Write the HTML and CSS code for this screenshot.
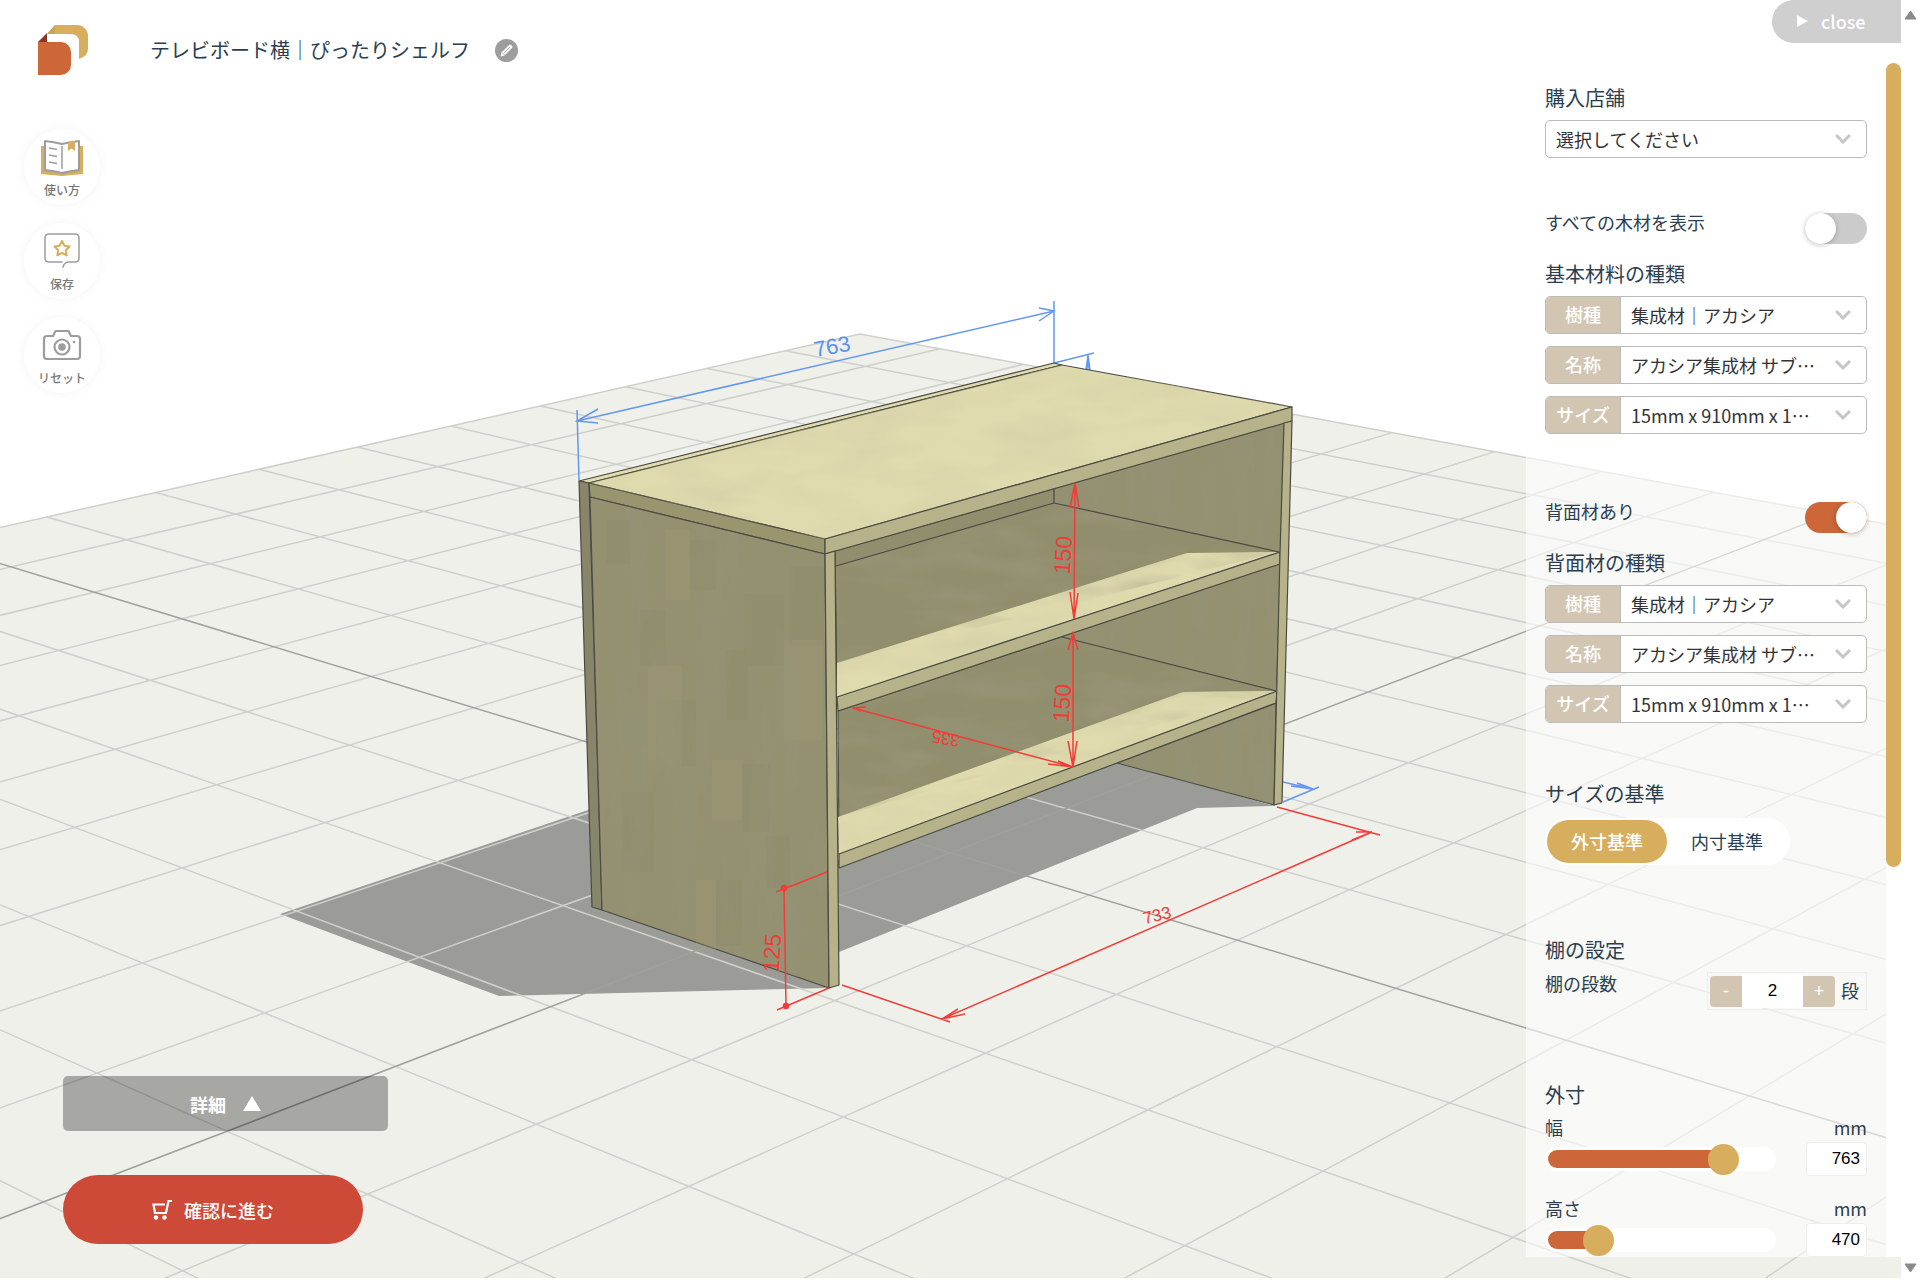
FILE: index.html
```html
<!DOCTYPE html>
<html lang="ja">
<head>
<meta charset="utf-8">
<title>テレビボード横｜ぴったりシェルフ</title>
<link rel="stylesheet" href="styles.css">
</head>
<body>
<div class="app">
  <svg class="scene" viewBox="0 0 1901 1278" preserveAspectRatio="xMidYMin slice" aria-label="棚の3Dプレビュー">
    <defs>
      <filter id="grain-v" x="0" y="0" width="100%" height="100%">
        <feTurbulence type="fractalNoise" baseFrequency="0.04 0.006" numOctaves="3" seed="4"/>
        <feColorMatrix values="0 0 0 0 0.3  0 0 0 0 0.3  0 0 0 0 0.2  0.9 0 0 0 -0.38"/>
      </filter>
      <filter id="grain-h" x="0" y="0" width="100%" height="100%">
        <feTurbulence type="fractalNoise" baseFrequency="0.012 0.04" numOctaves="3" seed="9"/>
        <feColorMatrix values="0 0 0 0 0.65  0 0 0 0 0.62  0 0 0 0 0.38  1.4 0 0 0 -0.54"/>
      </filter>
      <filter id="grain-dark" x="0" y="0" width="100%" height="100%">
        <feTurbulence type="fractalNoise" baseFrequency="0.012 0.04" numOctaves="3" seed="12"/>
        <feColorMatrix values="0 0 0 0 0.36  0 0 0 0 0.35  0 0 0 0 0.24  0.9 0 0 0 -0.38"/>
      </filter>
      <clipPath id="side-clip">
        <path d="M590 497L825 554L829 988L602 910zM1054 488L1284 423L1280 552L1054 503zM1062 637L1279 564L1276 691zM1117 763L1276 703L1274 805z"/>
      </clipPath>
      <clipPath id="top-clip">
        <path d="M589 483L1062 365L1292 407L825 539zM837 663L1187 553L1278 552L837 697zM838 817L1183 692L1276 691L839 854z"/>
      </clipPath>
      <clipPath id="dark-clip">
        <path d="M836 566L1054 503L1278 552L837 663zM838 711L1062 637L1276 691L838 817z"/>
      </clipPath>
    </defs>
    <path id="floor" class="floor"/>
    <path class="shadow" d="M600 806L280 914L499 996L829 988L839 952L1197 808L1274 806L1116 760L839 860z"/>
    <path id="grid" class="grid"/>
    <path id="axes" class="axes"/>

    <g class="dim blue">
      <path d="M577 421L1054 311M577 410L579 480M1054 301V363M598 409L577 421L598 423M1039 308L1054 311L1039 321"/>
      <path d="M1054 363L1094 353M1086 370L1088 355L1090 370M1088 370V355M1283 782L1313 789L1291 786M1297 783L1313 789M1283 802L1319 787"/>
      <text x="832" y="354" transform="rotate(-11 832 346)" class="dim-tall">763</text>
    </g>

    <g class="wood">
      <path class="lit" d="M579 481L1054 363L1062 365L589 483z"/>
      <path class="lit" d="M589 483L1062 365L1292 407L825 539z"/>
      <path class="back-edge" d="M579 481L589 483L602 910L592 907z"/>
      <path class="side-edge" d="M589 483L825 539V554L590 497z"/>
      <path class="side" d="M590 497L825 554L829 988L602 910z"/>
      <path class="dark" d="M835 551L1284 423L1280 552L837 697z"/>
      <path class="dark" d="M838 711L1280 564L1276 691L839 854z"/>
      <path class="side plain" d="M1054 488L1284 423L1280 552L1054 503zM1062 637L1280 564L1276 691z"/>
      <path class="side" d="M1117 763L1276 703L1274 805z"/>
      <path class="lit plain" d="M837 663L1187 553L1278 552L837 697z"/>
      <path class="lit plain" d="M838 817L1183 692L1276 691L839 854z"/>
      <path class="patch plain" d="M606 520h24v44h-24zM640 610h26v56h-26zM690 540h26v50h-26zM744 594h40v72h-40zM726 650h22v70h-22zM622 792h32v80h-32zM656 700h40v66h-40zM742 764h28v68h-28zM766 836h24v52h-24zM716 880h26v66h-26zM790 566h34v80h-34z"/>
      <path class="glow plain" d="M666 530h24v70h-24zM648 666h34v100h-34zM712 760h30v60h-30zM784 640h38v100h-38zM696 880h20v70h-20z"/>
      <g clip-path="url(#top-clip)" class="plain">
        <rect x="580" y="360" width="720" height="510" filter="url(#grain-h)"/>
      </g>
      <g clip-path="url(#dark-clip)" class="plain">
        <rect x="580" y="420" width="720" height="450" filter="url(#grain-dark)"/>
      </g>
      <g clip-path="url(#side-clip)" class="plain">
        <rect x="580" y="420" width="720" height="580" filter="url(#grain-v)"/>
      </g>
      <path class="front" d="M825 539L1292 407V421L825 554z"/>
      <path class="front" d="M825 554L835 551L839 985L829 988z"/>
      <path class="front" d="M837 697L1280 552V564L838 711z"/>
      <path class="front" d="M839 854L1277 691L1276 703L839 868z"/>
      <path class="front" d="M1284 423L1292 421L1282 803L1274 805L1280 553z"/>
      <path class="edge" d="M1054 488V503M836 566L1054 503L1279 552M1062 637L1276 691"/>
    </g>

    <g class="dim red">
      <path d="M1075 483L1074 619M1070 508L1075 483L1079 507M1070 592L1074 619L1078 593"/>
      <path d="M1073 633V767M1068 650L1073 633L1078 650M1068 741L1073 767L1077 741"/>
      <path d="M853 708L1073 767M866 707L853 708L861 711M1048 764L1073 767L1058 761"/>
      <path d="M784 888L786 1006M776 892L827 872M777 1010L829 988"/>
      <path d="M842 985L950 1022M1277 807L1380 835M942 1019L1372 832M965 1014L942 1019L958 1009M1352 840L1372 832L1356 832"/>
      <circle cx="784" cy="888" r="2.500"/><circle cx="786" cy="1006" r="2.500"/>
      <text x="1063" y="563" transform="rotate(-86 1063 555)" class="dim-mid">150</text>
      <text x="1062" y="711" transform="rotate(-86 1062 703)" class="dim-mid">150</text>
      <text x="772" y="961" transform="rotate(-86 772 953)" class="dim-mid">125</text>
      <text x="946" y="743" transform="rotate(190 946 738)" class="dim-small">335</text>
      <text x="1157" y="921" transform="rotate(-14 1157 915)" class="dim-small">733</text>
    </g>
  </svg>

  <main class="stage">
    <header class="top">
      <a class="logo" href="#" aria-label="ホーム">
        <svg width="50" height="50" viewBox="0 0 50 50">
          <path fill="#d7ae5e" d="M17 0H39A11 11 0 0 1 50 11V24Q50 31 41 34V17Q41 9 32 9H9z"/>
          <path fill="#c09a51" d="M17 0V9H9z" opacity=".6"/>
          <path fill="#8c3527" d="M9 8V17H0z"/>
          <path fill="#cd6638" d="M0 17H23A10 10 0 0 1 33 27V40A10 10 0 0 1 23 50H0z"/>
        </svg>
      </a>
      <h1>テレビボード横｜ぴったりシェルフ</h1>
      <button class="edit" type="button" aria-label="名前を編集">
        <svg width="23" height="23" viewBox="0 0 23 23">
          <circle cx="11.500" cy="11.500" r="11.500" fill="#9d9d9d"/>
          <path fill="#fff" d="M5.500 17.500L6.500 13.500L14 6Q15 5 16 6L17 7Q18 8 17 9L9.500 16.500z"/>
          <path d="M7 13.500L9.500 16M9 14L15 8" stroke="#9d9d9d" stroke-width=".8"/>
        </svg>
      </button>
    </header>

    <nav class="tools">
      <button type="button" class="tool">
        <svg width="44" height="40" viewBox="0 0 44 40">
          <path fill="#d7ae5e" d="M1 8H43V36L22 38L1 36z"/>
          <path fill="#fff" stroke="#9d9d9d" stroke-width="2" stroke-linejoin="round" d="M5 3Q14 4 22 6Q30 4 39 3V32Q30 33 22 35Q14 33 5 32z"/>
          <path stroke="#9d9d9d" stroke-width="1.500" d="M22 8V31M9 10l8 1.500M9 17l8 1.500M9 24l8 1.500"/>
          <path fill="#d7ae5e" d="M28 4L35 3V13L31.500 10.500L28 13z"/>
        </svg>
        <span>使い方</span>
      </button>
      <button type="button" class="tool">
        <svg width="44" height="40" viewBox="0 0 44 40" fill="none" stroke-linejoin="round" stroke-linecap="round">
          <path stroke="#9d9d9d" stroke-width="1.500" d="M22 30H9Q5 30 5 26V6Q5 2 9 2H35Q39 2 39 6V26Q39 30 35 30H28Q24 31 23 35"/>
          <path stroke="#d7ae5e" stroke-width="2" d="M22 9l2.400 4.700 5.100.8-3.700 3.700.9 5.200L22 21l-4.700 2.400.9-5.200-3.700-3.700 5.100-.8z"/>
        </svg>
        <span>保存</span>
      </button>
      <button type="button" class="tool">
        <svg width="44" height="40" viewBox="0 0 44 40" fill="none" stroke="#9d9d9d" stroke-width="2.200" stroke-linejoin="round">
          <path d="M4 13Q4 10 7 10H13L15.500 5H28.500L31 10H37Q40 10 40 13V30Q40 33 37 33H7Q4 33 4 30z"/>
          <circle cx="22" cy="21" r="7.500"/>
          <circle cx="22" cy="21" r="3.800" fill="#9d9d9d" stroke="none"/>
          <circle cx="34" cy="16" r="1.300" fill="#9d9d9d" stroke="none"/>
        </svg>
        <span>リセット</span>
      </button>
    </nav>

    <div class="actions">
      <button type="button" class="details">詳細
        <svg width="18" height="15" viewBox="0 0 18 15"><path fill="#fff" d="M9 0L18 15H0z"/></svg>
      </button>
      <button type="button" class="confirm">
        <svg width="20" height="20" viewBox="0 0 20 20" fill="none" stroke="#fff" stroke-width="2.200">
          <path d="M20 1H16.500L14 13H3L1.500 4.500H13"/>
          <circle cx="4" cy="17.500" r="2.200" fill="#fff" stroke="none"/><circle cx="12.500" cy="17.500" r="2.200" fill="#fff" stroke="none"/>
        </svg>
        確認に進む
      </button>
    </div>
  </main>

  <aside class="side-panel">
    <button type="button" class="close"><svg width="11" height="12" viewBox="0 0 11 12"><path fill="#fff" d="M0 0L11 6L0 12z"/></svg>close</button>
    <form class="panel">
      <section class="group">
        <h2><label for="shop">購入店舗</label></h2>
        <div class="field">
          <select id="shop"><option>選択してください</option></select>
          <svg class="chev" viewBox="0 0 16 10"><path d="M1 1L8 8L15 1"/></svg>
        </div>
      </section>

      <section class="group materials first">
        <div class="row"><label for="all-wood">すべての木材を表示</label><input class="toggle" type="checkbox" id="all-wood"></div>
        <h2>基本材料の種類</h2>
        <div class="fields">
          <div class="field tagged"><label for="b1">樹種</label><select id="b1"><option>集成材｜アカシア</option></select><svg class="chev" viewBox="0 0 16 10"><path d="M1 1L8 8L15 1"/></svg></div>
          <div class="field tagged"><label for="b2">名称</label><select id="b2"><option>アカシア集成材 サブ…</option></select><svg class="chev" viewBox="0 0 16 10"><path d="M1 1L8 8L15 1"/></svg></div>
          <div class="field tagged"><label for="b3">サイズ</label><select id="b3"><option>15mm x 910mm x 1…</option></select><svg class="chev" viewBox="0 0 16 10"><path d="M1 1L8 8L15 1"/></svg></div>
        </div>
      </section>

      <section class="group materials">
        <div class="row"><label for="back">背面材あり</label><input class="toggle" type="checkbox" id="back" checked></div>
        <h2>背面材の種類</h2>
        <div class="fields">
          <div class="field tagged"><label for="c1">樹種</label><select id="c1"><option>集成材｜アカシア</option></select><svg class="chev" viewBox="0 0 16 10"><path d="M1 1L8 8L15 1"/></svg></div>
          <div class="field tagged"><label for="c2">名称</label><select id="c2"><option>アカシア集成材 サブ…</option></select><svg class="chev" viewBox="0 0 16 10"><path d="M1 1L8 8L15 1"/></svg></div>
          <div class="field tagged"><label for="c3">サイズ</label><select id="c3"><option>15mm x 910mm x 1…</option></select><svg class="chev" viewBox="0 0 16 10"><path d="M1 1L8 8L15 1"/></svg></div>
        </div>
      </section>

      <section class="group basis">
        <h2>サイズの基準</h2>
        <div class="segmented">
          <label><input type="radio" name="basis" checked><span>外寸基準</span></label>
          <label><input type="radio" name="basis"><span>内寸基準</span></label>
        </div>
      </section>

      <section class="group">
        <h2>棚の設定</h2>
        <div class="row">
          <label for="tiers">棚の段数</label>
          <div class="stepper">
            <button type="button" aria-label="減らす">-</button><input id="tiers" type="text" inputmode="numeric" value="2"><button type="button" aria-label="増やす">+</button><span>段</span>
          </div>
        </div>
      </section>

      <section class="group">
        <h2>外寸</h2>
        <div class="size">
          <label for="w">幅</label><span class="unit">mm</span>
          <input class="range" type="range" min="100" max="904" value="763" aria-label="幅" style="--fill:77%">
          <input class="num" id="w" type="text" inputmode="numeric" value="763">
        </div>
        <div class="size">
          <label for="h">高さ</label><span class="unit">mm</span>
          <input class="range" type="range" min="300" max="1250" value="470" aria-label="高さ" style="--fill:22%">
          <input class="num" id="h" type="text" inputmode="numeric" value="470">
        </div>
      </section>
    </form>
    <div class="track"><div class="thumb"></div></div>
  </aside>

  <div class="page-scroll">
    <svg width="13" height="10" viewBox="0 0 13 10"><path d="M6.500 1L12 9H1z"/></svg>
    <svg width="13" height="10" viewBox="0 0 13 10"><path d="M6.500 9L12 1H1z"/></svg>
  </div>
</div>
<script src="scene.js"></script>
</body>
</html>
```
FILE: styles.css
```css
* { box-sizing: border-box; }
body { margin: 0; background: #fff; color: #2c3e50; font-family: "Noto Sans CJK JP", sans-serif; font-size: 18px; }
button, select { font: inherit; color: inherit; border: 0; background: none; padding: 0; margin: 0; cursor: pointer; }
h1, h2 { margin: 0; font-weight: 400; font-size: 20px; line-height: 28px; }

.app { position: relative; display: grid; grid-template-columns: 1fr 375px 19px; height: calc(100vh - 2px); overflow: hidden; }
.scene { position: absolute; top: 0; left: 0; width: calc(100% - 19px); height: 100%; }

.floor { fill: #eff0ea; }
.shadow { fill: #9b9c97; }
.grid { fill: none; stroke: #cfd0cc; stroke-width: 1.5; }
.axes { fill: none; stroke: #a0a19c; stroke-width: 1.5; }
.wood path { stroke: #4a4a42; stroke-width: 1.2; stroke-linejoin: round; }
.wood .plain, .wood .plain path { stroke: none; }
.lit { fill: #e0dbae; }
.side { fill: #949171; }
.dark { fill: #918e6d; }
.side-edge { fill: #98956f; }
.back-edge { fill: #88866a; }
.front { fill: #b6b38a; }
.patch { fill: #82825f; fill-opacity: .16; }
.glow { fill: #a39f79; fill-opacity: .25; }
.edge { fill: none; }
.dim { fill: none; stroke-width: 1.5; }
.dim text { stroke: none; text-anchor: middle; font-family: "Liberation Sans Narrow", "Liberation Sans", sans-serif; }
.blue { stroke: #6497f2; }
.blue text { fill: #5b91f0; }
.red { stroke: #f33b38; }
.red text, .red circle { fill: #f33b38; }
.red text { font-family: "Liberation Sans", sans-serif; }
.dim-tall { font-size: 22px; }
.dim-mid { font-size: 23px; }
.dim-small { font-size: 17px; }

.stage { position: relative; display: flex; flex-direction: column; align-items: flex-start; padding: 25px 0 37px; }
.top { display: flex; align-items: center; padding-left: 38px; height: 50px; }
.logo { display: flex; }
.top h1 { margin-left: 62px; }
.edit { display: flex; margin-left: 25px; }

.tools { display: flex; flex-direction: column; gap: 18px; margin: 54px 0 0 24px; }
.tool { display: flex; flex-direction: column; align-items: center; gap: 3px; width: 76px; height: 76px; padding-top: 9px; border-radius: 50%; background: #fff; box-shadow: 0 0 12px rgba(0,0,0,.05); color: #777; font-size: 12px; line-height: 18px; font-weight: 500; }

.actions { display: flex; flex-direction: column; align-items: flex-start; gap: 44px; margin-top: auto; padding-left: 63px; color: #fff; font-weight: 500; }
.details { display: flex; align-items: center; justify-content: center; gap: 17px; width: 325px; height: 55px; border-radius: 5px; background: rgba(0,0,0,.3); font-weight: 700; }
.confirm { display: flex; align-items: center; justify-content: center; gap: 12px; width: 300px; height: 69px; border-radius: 35px; background: #cd4938; }

.side-panel { position: relative; display: grid; grid-template-columns: 1fr 15px; grid-template-rows: 63px minmax(0, 1fr); margin-bottom: 24px; background: linear-gradient(to right, rgba(255,255,255,.6) 360px, #fff 360px); }
.close { grid-column: 1 / -1; justify-self: end; display: flex; align-items: center; gap: 13px; width: 129px; height: 43px; padding: 0 0 2px 25px; border-radius: 22px 0 0 22px; background: #cfcfcf; color: #fff; font-weight: 500; }
.track { background: #fff; }
.thumb { height: 804px; max-height: 68%; border-radius: 8px; background: #d7ae5e; }

.panel { overflow: hidden; padding: 21px 19px 0; line-height: 22px; }
.group + .group { margin-top: 71px; }
.group.first { margin-top: 53px; }
.group.materials:not(.first) { margin-top: 66px; }
.group.basis { margin-top: 57px; }
.row { display: flex; justify-content: space-between; align-items: flex-start; }
.materials h2 { margin-top: 16px; }
.toggle { appearance: none; width: 62px; height: 31px; margin: 2px 0 0; border-radius: 16px; background: #cbcbcb; display: flex; }
.toggle::before { content: ""; width: 31px; height: 31px; border-radius: 50%; background: #fff; box-shadow: 0 1px 5px rgba(0,0,0,.25); }
.toggle:checked { background: #cd6638; justify-content: flex-end; }

.fields { display: grid; gap: 12px; }
h2 + .field, h2 + .fields { margin-top: 8px; }
.field { display: grid; grid-template-columns: 1fr 46px; height: 38px; border: 1px solid #bbb; border-radius: 5px; background: #fff; overflow: hidden; align-items: stretch; color: #333; }
.field select { grid-area: 1 / 1 / 2 / -1; appearance: none; padding-left: 10px; outline: 0; }
.field.tagged { grid-template-columns: 75px 1fr 46px; }
.tagged label { display: flex; align-items: center; justify-content: center; padding-bottom: 2px; background: #d2c6b3; border-right: 1px solid #bbb; color: #fff; font-weight: 500; }
.tagged select { grid-column: 2 / -1; }
.chev { grid-row: 1; grid-column: -2; align-self: center; justify-self: center; width: 16px; height: 10px; fill: none; stroke: #c6c6c6; stroke-width: 3; pointer-events: none; }

.segmented { display: flex; width: 245px; height: 47px; margin-top: 10px; padding: 2px; border-radius: 24px; background: #fff; }
.segmented label { display: flex; width: 120px; }
.segmented input { appearance: none; margin: 0; width: 0; }
.segmented span { flex: 1; display: flex; align-items: center; justify-content: center; padding-bottom: 2px; border-radius: 22px; }
.segmented input:checked + span { background: #d7ae5e; color: #fff; font-weight: 500; }

h2 + .row { margin-top: 8px; }
.stepper { display: flex; align-items: center; width: 160px; height: 38px; padding: 0 2px; border: 1px solid #eee; }
.stepper button { width: 32px; height: 31px; background: #d2c6b3; color: #fff; border-radius: 4px 0 0 4px; font-family: "Liberation Sans", sans-serif; }
.stepper input + button { border-radius: 0 4px 4px 0; }
.stepper input { width: 61px; height: 34px; border: 0; padding: 0; background: #fff; text-align: center; color: #000; font: 17px "Liberation Sans", sans-serif; }
.stepper span { margin-left: 6px; padding-bottom: 2px; }

.size { display: grid; grid-template-columns: 1fr 61px; grid-template-rows: 26px 34px; align-items: center; margin-top: 7px; }
.size label, .unit { align-self: start; }
.size + .size { margin-top: 21px; }
.unit { justify-self: end; }
.range { appearance: none; width: 231px; height: 24px; margin: 0; border: 3px solid #fff; border-radius: 12px; background: #fff; }
.range::-webkit-slider-runnable-track { height: 18px; border-radius: 9px; background: linear-gradient(to right, #cd6638 var(--fill), #fff var(--fill)); }
.range::-webkit-slider-thumb { appearance: none; width: 31px; height: 31px; margin-top: -6px; border-radius: 50%; background: #d7ae5e; }
.num { width: 61px; height: 34px; padding: 0 6px 0 0; border: 1px solid #eee; border-radius: 4px; background: #fff; text-align: right; color: #000; font: 17px "Liberation Sans", sans-serif; }

.page-scroll { position: relative; display: flex; flex-direction: column; justify-content: space-between; align-items: center; padding: 10px 0 8px; background: #fff; }
.page-scroll path { fill: #8a8a8a; stroke: #8a8a8a; stroke-width: 1; stroke-linejoin: round; }
```
FILE: scene.js
```js
// Projects the 20 x 20 floor grid through the camera's plane-to-screen matrix.
const CELLS = 20;

function project(u, v) {
  const s = u / 10;
  const t = v / 10;
  const w = 1 - 0.1906 * s - 0.2113 * t;
  const x = (860 + 622 * s - 913.5 * t) / w;
  const y = (334 + 81.95 * s + 94.1 * t) / w;
  return x.toFixed(1) + " " + y.toFixed(1);
}

function segment(u1, v1, u2, v2) {
  return "M" + project(u1, v1) + "L" + project(u2, v2);
}

let grid = "";
let axes = "";
for (let i = 0; i <= CELLS; i++) {
  const pair = segment(i, 0, i, CELLS) + segment(0, i, CELLS, i);
  if (i === CELLS / 2) axes += pair;
  else grid += pair;
}

document.getElementById("floor").setAttribute("d",
  "M" + project(0, 0) + "L" + project(CELLS, 0) + "L" + project(CELLS, CELLS) + "L" + project(0, CELLS) + "z");
document.getElementById("grid").setAttribute("d", grid);
document.getElementById("axes").setAttribute("d", axes);
```
